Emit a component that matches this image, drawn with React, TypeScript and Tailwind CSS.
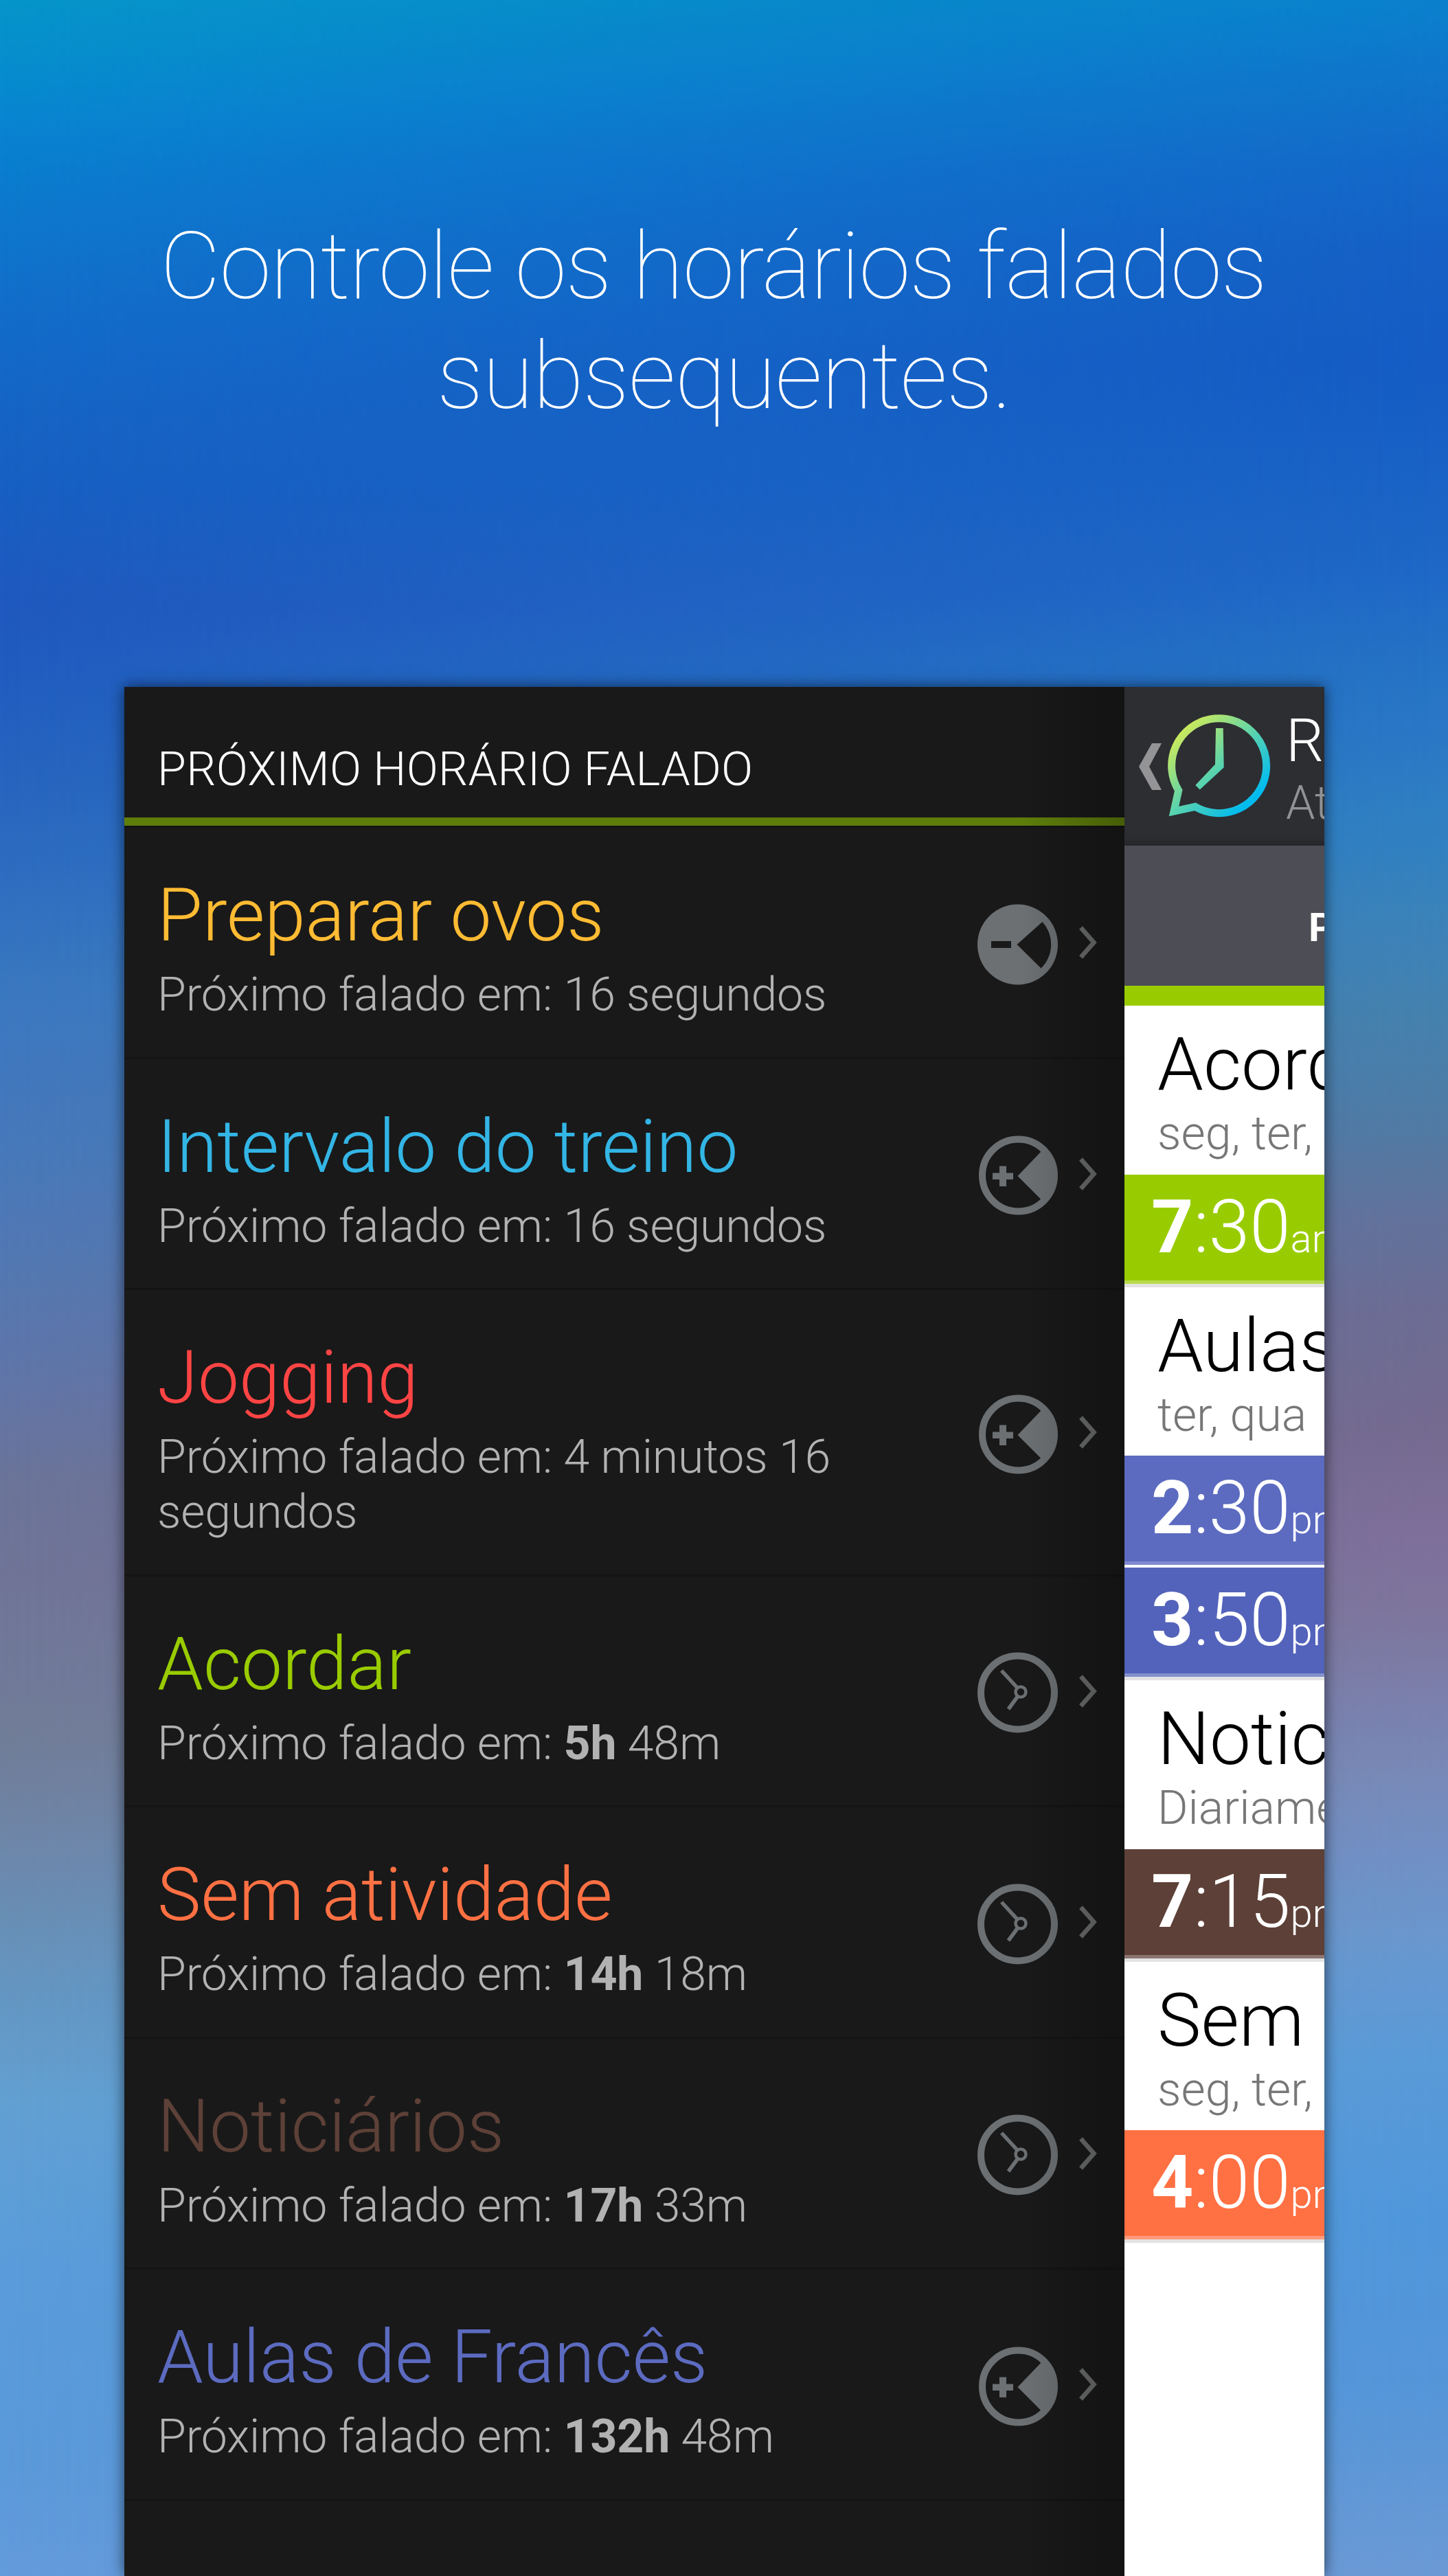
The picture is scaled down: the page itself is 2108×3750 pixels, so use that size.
import React from 'react';

type IconKind = 'minus' | 'plus' | 'clock';

interface Upcoming {
  title: string;
  color: string;
  before: string;
  strong?: string;
  after?: string;
  icon: IconKind;
  height: string;
}

interface Slot {
  hour: string;
  minutes: string;
  period: string;
  row: string;
}

interface Alarm {
  title: string;
  days: string;
  slots: Slot[];
}

const upcoming: Upcoming[] = [
  { title: 'Preparar ovos', color: 'text-[#ffbb33]', before: '16 segundos', icon: 'minus', height: 'h-[337px]' },
  { title: 'Intervalo do treino', color: 'text-[#33b5e5]', before: '16 segundos', icon: 'plus', height: 'h-[336px]' },
  { title: 'Jogging', color: 'text-[#ff4444]', before: '4 minutos 16 segundos', icon: 'plus', height: 'h-[417px]' },
  { title: 'Acordar', color: 'text-[#99cc00]', before: '', strong: '5h', after: '48m', icon: 'clock', height: 'h-[336px]' },
  { title: 'Sem atividade', color: 'text-[#ff7043]', before: '', strong: '14h', after: '18m', icon: 'clock', height: 'h-[337px]' },
  { title: 'Noticiários', color: 'text-[#5d4037]', before: '', strong: '17h', after: '33m', icon: 'clock', height: 'h-[336px]' },
  { title: 'Aulas de Francês', color: 'text-[#5c6bc0]', before: '', strong: '132h', after: '48m', icon: 'plus', height: 'h-[337px]' },
];

const alarms: Alarm[] = [
  {
    title: 'Acordar',
    days: 'seg, ter, qua, qui, sex',
    slots: [{ hour: '7', minutes: '30', period: 'am', row: 'bg-[#99cc00] border-[#b8db4d]' }],
  },
  {
    title: 'Aulas de Francês',
    days: 'ter, qua',
    slots: [
      { hour: '2', minutes: '30', period: 'pm', row: 'bg-[#5c6bc0] border-[#8089d0]' },
      { hour: '3', minutes: '50', period: 'pm', row: 'bg-[#5363bb] border-[#8390cc]' },
    ],
  },
  {
    title: 'Noticiários',
    days: 'Diariamente',
    slots: [{ hour: '7', minutes: '15', period: 'pm', row: 'bg-[#5d4037] border-[#8b7570]' }],
  },
  {
    title: 'Sem atividade',
    days: 'seg, ter, qua, qui, sex',
    slots: [{ hour: '4', minutes: '00', period: 'pm', row: 'bg-[#ff7043] border-[#ff9b7b]' }],
  },
];

function StatusIcon({ kind }: { kind: IconKind }) {
  return (
    <svg viewBox="0 0 118 118" className="mt-[5px] h-[118px] w-[118px] shrink-0">
      {kind === 'minus' && (
        <>
          <circle cx="58.500" cy="59" r="58.500" fill="#6c7073" />
          <path d="M57.500 59 94.500 26A48.500 48.500 0 0 1 92.500 93.500Z" fill="#191919" />
          <rect x="20" y="54" width="29" height="10" fill="#191919" />
        </>
      )}
      {kind === 'plus' && (
        <>
          <circle cx="59.500" cy="59" r="52.500" fill="none" stroke="#6c7073" strokeWidth="10" />
          <path d="M58.500 60 93 24A48 48 0 0 1 92.500 94Z" fill="#6c7073" />
          <path d="M32 45.500h10v10h10v9.500h-10v10h-10v-10H22v-9.500h10Z" fill="#6c7073" />
        </>
      )}
      {kind === 'clock' && (
        <g fill="none" stroke="#6c7073">
          <circle cx="58.500" cy="59" r="53.500" strokeWidth="10" />
          <circle cx="63" cy="58" r="7.500" strokeWidth="4.500" />
          <path d="M58.500 52.500 35 27M59 64 45 83" strokeWidth="5.500" />
        </g>
      )}
    </svg>
  );
}

function Chevron() {
  return (
    <svg viewBox="0 0 26 48" className="ml-[30px] h-[48px] w-[26px] shrink-0">
      <path d="M2.500 2.500 21.500 24 2.500 45.500" fill="none" stroke="#6b6c6c" strokeWidth="6.500" />
    </svg>
  );
}

function Logo() {
  return (
    <svg viewBox="0 0 150 150" className="mb-[2px] ml-[8px] h-[150px] w-[150px] shrink-0">
      <defs>
        <linearGradient id="logo" gradientUnits="userSpaceOnUse" x1="22" y1="28" x2="120" y2="128">
          <stop offset="0" stopColor="#c5e860" />
          <stop offset="0.5" stopColor="#5bd4ad" />
          <stop offset="1" stopColor="#00bbf0" />
        </linearGradient>
      </defs>
      {/* Speech bubble outline, then the clock hands */}
      <path
        d="M15.700 110.600A69 69 0 1 1 39.800 134.300L9 141Z"
        fill="none"
        stroke="url(#logo)"
        strokeWidth="11"
      />
      <path d="M70 20H80.700L81.700 77.300 46.700 109.500 40.300 103 69 72.700Z" fill="url(#logo)" />
    </svg>
  );
}

function UpcomingRow({ item }: { item: Upcoming }) {
  return (
    <li className={`flex items-center border-b-[3px] border-[#141414] pl-[48px] pr-[41px] ${item.height}`}>
      <div className="w-[1194px] shrink-0 self-start pt-[65px]">
        <h2 className={`text-[107px] leading-[126px] font-light ${item.color}`}>{item.title}</h2>
        <p className="mt-[12px] w-[1050px] text-[68px] leading-[80px] font-light tracking-[-0.15px] text-[#b2b2b2]">
          Próximo falado em: {item.before}
          {item.strong && <b className="font-bold">{item.strong}</b>} {item.after}
        </p>
      </div>
      <StatusIcon kind={item.icon} />
      <Chevron />
    </li>
  );
}

function AlarmCard({ alarm }: { alarm: Alarm }) {
  return (
    <section>
      <div className="h-[245.5px] pt-[23px] pl-[48px] whitespace-nowrap">
        <h3 className="text-[107px] leading-[126px] font-light text-black">{alarm.title}</h3>
        <p className="-mt-[3px] text-[68px] leading-[80px] font-light text-[#777777]">{alarm.days}</p>
      </div>
      <div className="flex flex-col gap-[4px] border-b-[5px] border-[#e3e3e3]">
        {alarm.slots.map((slot) => (
          <div
            key={slot.hour}
            className={`h-[159px] border-b-[5px] pl-[39px] text-[107px] leading-[153px] font-light whitespace-nowrap text-white ${slot.row}`}
          >
            <b className="font-bold">{slot.hour}</b>:{slot.minutes}
            <span className="text-[58px]">{slot.period}</span>
          </div>
        ))}
      </div>
    </section>
  );
}

// Two vertical colour ramps, the right one fading in across the page
function Backdrop() {
  return (
    <>
      <div className="absolute inset-0 bg-[linear-gradient(to_bottom,#0595c9_0%,#078bcf_3.2%,#0a7ed0_6.4%,#0f74cc_9.6%,#136bc9_12.8%,#1564c5_16%,#185fc3_19.1%,#2059bf_23.6%,#215ebf_26.8%,#2664bf_30%,#2c6bc0_33.2%,#3a77c0_38.3%,#4779bb_44.6%,#5378b2_49.1%,#6275a6_54.2%,#6b7499_57.4%,#707598_61.2%,#717d98_67.6%,#6e86a8_71.4%,#6594be_76.5%,#62a0d2_81.6%,#5a9cdb_88%,#5b99da_95.7%,#639bdc_100%)]" />
      <div className="absolute inset-0 bg-[linear-gradient(to_bottom,#0a80cc_0%,#1074ca_3.2%,#1468c8_6.4%,#1560c5_9.6%,#155cc4_14%,#1961c5_17.9%,#1f68c6_22.3%,#2472c5_25.5%,#2a78c5_28.7%,#2f80c2_31.9%,#3b83b9_35.7%,#4581ad_39.5%,#4f7ba4_43.4%,#62729a_47.2%,#6d6c93_51%,#756a8f_55.5%,#7d6f9a_59.3%,#7e759d_62.5%,#7b7fab_65.7%,#7889b8_68.9%,#7190c5_72.1%,#6997ce_75.3%,#5a9ad8_79.7%,#4f97da_86.1%,#5495d8_92.5%,#6b99d4_100%)] [mask-image:linear-gradient(to_right,transparent,black)]" />
    </>
  );
}

export default function App() {
  return (
    <main className="relative flex h-[3750px] w-[2108px] flex-col overflow-hidden font-['Roboto',sans-serif]">
      <Backdrop />
      <h1 className="relative mt-[308px] h-[692px] text-center text-[136px] leading-[160px] font-thin tracking-[-1.3px] text-white">
        Controle os horários falados&nbsp;
        <br />
        subsequentes.
      </h1>

      <div className="relative ml-[181px] flex h-[2750px] w-[1747px] overflow-hidden shadow-[0_0_20px_rgba(0,0,0,0.6)]">
        {/* Drawer */}
        <div className="relative w-[1456px] shrink-0 bg-[#191919]">
          <div className="h-[202px] border-b-[12px] border-[#5e7d0a] pt-[80px] pl-[48px] text-[68px] leading-[80px] font-light tracking-[0.33px] text-white">
            PRÓXIMO HORÁRIO FALADO
          </div>
          <ul className="border-t-[3px] border-[#141414]">
            {upcoming.map((item) => (
              <UpcomingRow key={item.title} item={item} />
            ))}
          </ul>
          <div className="absolute inset-y-0 right-0 w-[150px] bg-gradient-to-r from-transparent to-black/25" />
        </div>

        {/* App content pushed aside by the drawer */}
        <div className="w-[291px] shrink-0 overflow-hidden bg-white">
          <header className="flex h-[231px] items-center bg-[#2d2e32] pl-[21px] shadow-[inset_0_-10px_6px_-4px_#26272a]">
            <svg viewBox="0 0 34 70" className="h-[70px] w-[34px] shrink-0">
              <path d="M19 1h14L15 35l18 34H19L0 35Z" fill="#949497" />
            </svg>
            <Logo />
            <div className="ml-[22px] self-start pt-[30px] font-light whitespace-nowrap">
              <div className="text-[87px] leading-[96px] text-white">Relógio Falante</div>
              <div className="mt-[3px] text-[68px] leading-[80px] text-[#929294]">Ativado</div>
            </div>
          </header>
          <div className="flex h-[233px] items-center border-b-[29px] border-[#99cc00] bg-[#4d4d55] pt-[34px] pl-[268px] text-[58px] font-bold text-white">
            PRINCIPAL
          </div>
          {alarms.map((alarm) => (
            <AlarmCard key={alarm.title} alarm={alarm} />
          ))}
        </div>
      </div>
    </main>
  );
}
